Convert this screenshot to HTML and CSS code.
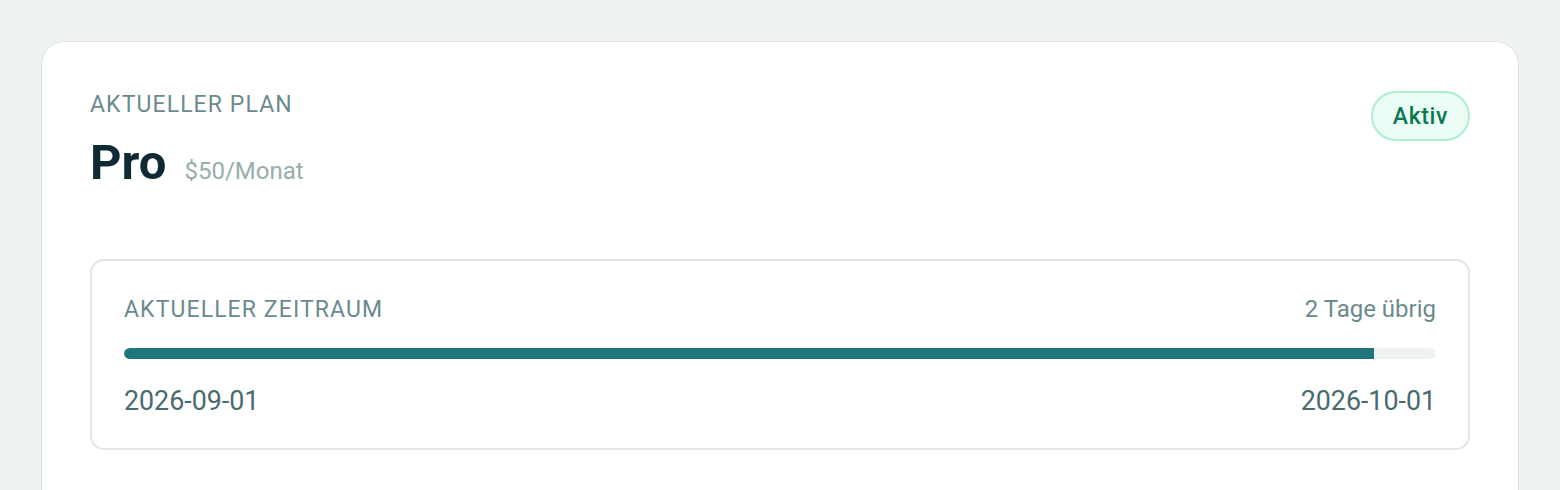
FILE: index.html
```html
<!DOCTYPE html>
<html lang="de">
<head>
<meta charset="utf-8">
<title>Plan</title>
<link rel="stylesheet" href="styles.css">
</head>
<body>
<div class="card">
  <div class="head">
    <div class="plan">
      <div class="label">AKTUELLER PLAN</div>
      <div class="name-row">
        <span class="name">Pro</span>
        <span class="price">$50/Monat</span>
      </div>
    </div>
    <span class="badge">Aktiv</span>
  </div>
  <div class="period">
    <div class="period-top">
      <span class="label">AKTUELLER ZEITRAUM</span>
      <span class="remaining">2 Tage übrig</span>
    </div>
    <div class="track"><div class="fill" style="width:95.3%"></div></div>
    <div class="dates">
      <span>2026-09-01</span>
      <span>2026-10-01</span>
    </div>
  </div>
</div>
</body>
</html>
```

FILE: styles.css
```css
html, body {
  margin: 0;
  padding: 0;
  background: #eef2f1;
  overflow: hidden;
}
body {
  padding: 41px 41px 0 41px;
  font-family: Roboto, "Noto Sans", sans-serif;
  color: #0f2a33;
}
.card {
  background: #ffffff;
  border: 1px solid #dce4e2;
  border-radius: 24px;
  padding: 49px 48px 60px 48px;
  height: 480px;
  box-sizing: border-box;
}
.head {
  display: flex;
  justify-content: space-between;
  align-items: flex-start;
}
.label {
  font-size: 23px;
  line-height: 28px;
  letter-spacing: 1.1px;
  color: #6b8a8f;
}
.name-row {
  display: flex;
  align-items: baseline;
  gap: 18px;
  margin-top: 16px;
}
.name {
  font-size: 49px;
  font-weight: 700;
  line-height: 56px;
  color: #0f2a33;
}
.price {
  font-size: 24px;
  color: #97aeab;
}
.badge {
  display: inline-flex;
  align-items: center;
  height: 50px;
  box-sizing: border-box;
  padding: 0 20px;
  border-radius: 25px;
  border: 2px solid #a9f0d1;
  background: #ecfdf5;
  color: #077a52;
  font-size: 23px;
  font-weight: 500;
  letter-spacing: 0.6px;
}
.period {
  margin-top: 68px;
  border: 2px solid #e1e7e6;
  border-radius: 14px;
  padding: 34px 32px 31px 32px;
}
.period-top {
  display: flex;
  justify-content: space-between;
  align-items: baseline;
  height: 28px;
}
.remaining {
  font-size: 24px;
  line-height: 28px;
  color: #6b8a8f;
}
.track {
  margin-top: 25px;
  height: 11px;
  border-radius: 6px;
  background: #eef2f1;
  overflow: hidden;
}
.fill {
  height: 100%;
  background: #20757a;
  border-radius: 6px 0 0 6px;
}
.dates {
  margin-top: 26px;
  display: flex;
  justify-content: space-between;
  font-size: 26.8px;
  line-height: 32px;
  color: #4b6a6e;
}
```
